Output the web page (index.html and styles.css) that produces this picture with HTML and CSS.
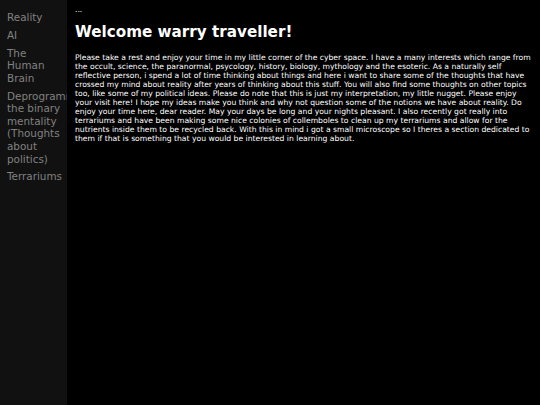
FILE: index.html
```html
<!DOCTYPE html>
<html>
<head>
<meta charset="utf-8">
<link rel="stylesheet" href="styles.css">
</head>
<body>
<div class="layout">
  <nav class="sidenav">
    <a href="#">Reality</a>
    <a href="#">AI</a>
    <a href="#">The Human Brain</a>
    <a href="#">Deprogramming the binary mentality (Thoughts about politics)</a>
    <a href="#">Terrariums</a>
  </nav>
  <main class="main">
    <p class="dots">...</p>
    <h1 class="title">Welcome warry traveller!</h1>
    <p class="text">Please take a rest and enjoy your time in my little corner of the cyber space. I have a many interests which range from the occult, science, the paranormal, psycology, history, biology, mythology and the esoteric. As a naturally self reflective person, i spend a lot of time thinking about things and here i want to share some of the thoughts that have crossed my mind about reality after years of thinking about this stuff. You will also find some thoughts on other topics too, like some of my political ideas. Please do note that this is just my interpretation, my little nugget. Please enjoy your visit here! I hope my ideas make you think and why not question some of the notions we have about reality. Do enjoy your time here, dear reader. May your days be long and your nights pleasant. I also recently got really into terrariums and have been making some nice colonies of collemboles to clean up my terrariums and allow for the nutrients inside them to be recycled back. With this in mind i got a small microscope so I theres a section dedicated to them if that is something that you would be interested in learning about.</p>
  </main>
</div>
</body>
</html>
```

FILE: styles.css
```css
html, body {
  margin: 0;
  padding: 0;
  background: #000;
  color: #fff;
  font-family: "DejaVu Sans", Verdana, sans-serif;
}

.layout {
  display: flex;
  min-height: 100vh;
}

.sidenav {
  flex: 0 0 67px;
  width: 67px;
  background: #111;
  padding-top: 8.5px;
  overflow: hidden;
  display: flex;
  flex-direction: column;
}

.sidenav a {
  display: block;
  padding: 2.6px 0 2.6px 7px;
  color: #818181;
  text-decoration: none;
  font-size: 10.4px;
  line-height: 12.6px;
}

.main {
  flex: 1;
  padding: 0 6px 0 8px;
}

.dots {
  margin: 4.5px 0 0;
  font-size: 7.65px;
  line-height: 9.1px;
}

.title {
  margin: 10.3px 0 11px;
  font-size: 15.2px;
  line-height: 17.7px;
  font-weight: bold;
}

.text {
  margin: 0;
  font-size: 7.65px;
  line-height: 9.1px;
}
```
